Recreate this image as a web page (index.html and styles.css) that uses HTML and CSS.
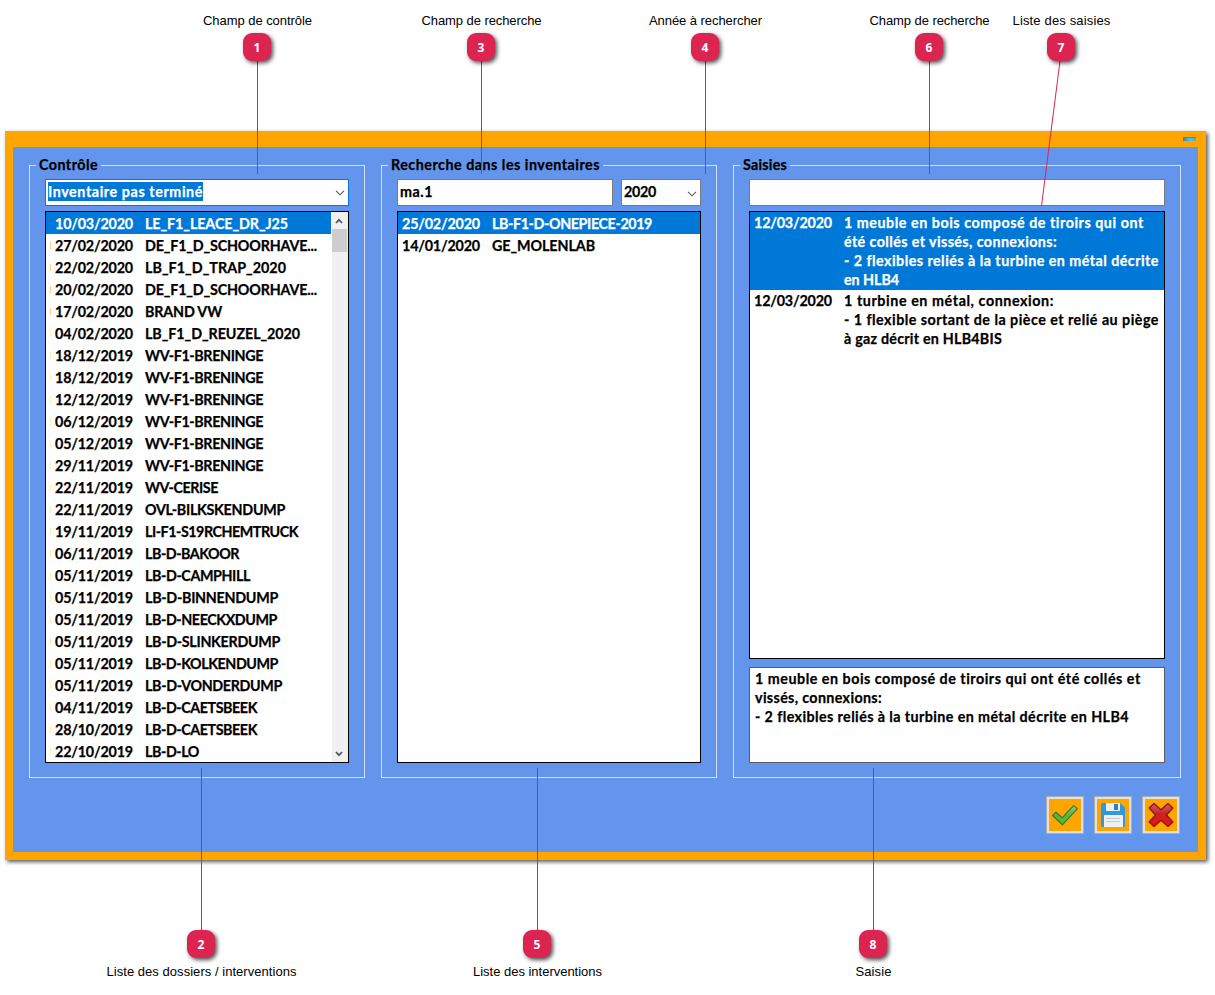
FILE: index.html
```
<!DOCTYPE html>
<html lang="fr">
<head>
<meta charset="utf-8">
<title>Inventaires</title>
<link rel="stylesheet" href="styles.css">
</head>
<body>
<main class="window">
  <div class="minimize"></div>
  <div class="groups">
    <section class="group">
      <h2 class="legend"><span data-w="59">Contrôle</span></h2>
      <div class="fields">
        <div class="field select focus"><span class="selected" data-w="155">Inventaire pas terminé</span><svg class="chevron" viewBox="0 0 10 6"><path d="M1 .8l4 4 4-4"/></svg></div>
      </div>
      <div class="list with-bar">
        <div class="rows" id="dossiers"></div>
        <div class="scrollbar">
          <svg class="arrow" viewBox="0 0 8 6"><path d="M1 5l3-3.2L7 5"/></svg>
          <div class="thumb"></div>
          <svg class="arrow down" viewBox="0 0 8 6"><path d="M1 1l3 3.2L7 1"/></svg>
        </div>
      </div>
    </section>
    <section class="group">
      <h2 class="legend"><span data-w="209">Recherche dans les inventaires</span></h2>
      <div class="fields">
        <div class="field"><span data-w="33">ma.1</span></div>
        <div class="field select year"><span data-w="32">2020</span><svg class="chevron" viewBox="0 0 10 6"><path d="M1 .8l4 4 4-4"/></svg></div>
      </div>
      <div class="list">
        <div class="rows" id="interventions"></div>
      </div>
    </section>
    <section class="group wide">
      <h2 class="legend"><span data-w="44">Saisies</span></h2>
      <div class="fields"><div class="field"></div></div>
      <div class="list entries">
        <div class="entry active">
          <span class="date" data-w="78">12/03/2020</span>
          <div>
            <p><span data-w="300">1 meuble en bois composé de tiroirs qui ont</span></p>
            <p><span data-w="213">été collés et vissés, connexions:</span></p>
            <p><span data-w="315">- 2 flexibles reliés à la turbine en métal décrite</span></p>
            <p><span data-w="55">en HLB4</span></p>
          </div>
        </div>
        <div class="entry">
          <span class="date" data-w="78">12/03/2020</span>
          <div>
            <p><span data-w="210">1 turbine en métal, connexion:</span></p>
            <p><span data-w="315">- 1 flexible sortant de la pièce et relié au piège</span></p>
            <p><span data-w="158">à gaz décrit en HLB4BIS</span></p>
          </div>
        </div>
      </div>
      <div class="memo">
        <p><span data-w="386">1 meuble en bois composé de tiroirs qui ont été collés et</span></p>
        <p><span data-w="127">vissés, connexions:</span></p>
        <p><span data-w="374">- 2 flexibles reliés à la turbine en métal décrite en HLB4</span></p>
      </div>
    </section>
  </div>
  <div class="actions">
    <button class="action" aria-label="Valider"><svg viewBox="0 0 32 32"><defs><linearGradient id="g" x1="0" y1="0" x2="0" y2="1"><stop offset="0" stop-color="#8bcf78"/><stop offset=".5" stop-color="#55b743"/><stop offset="1" stop-color="#35d30c"/></linearGradient></defs><path d="M3.600 16.500l3.300-3.300 6.300 5.600L24.600 6.600l3.800 3-15 16.200z" fill="url(#g)" stroke="#467233" stroke-width="1.200" stroke-linejoin="round"/></svg></button>
    <button class="action" aria-label="Enregistrer"><svg viewBox="0 0 32 32"><path d="M5.500 4H23l5 4.500v18q0 1.500-1.500 1.500h-21Q4 28 4 26.500v-21Q4 4 5.500 4z" fill="#3398db"/><path d="M9 4h14v7q0 1-1 1H10q-1 0-1-1z" fill="#eceff1"/><path d="M17 5h4v6h-4z" fill="#2582c4"/><path d="M8 16h17q1 0 1 1v11H7V17q0-1 1-1z" fill="#eef1f3"/><path d="M9 19.500h14M9 22.500h14" stroke="#c3c8cc" stroke-width="1.200"/></svg></button>
    <button class="action" aria-label="Fermer"><svg viewBox="0 0 32 32"><defs><linearGradient id="r" x1="0" y1="0" x2="0" y2="1"><stop offset="0" stop-color="#dc6060"/><stop offset=".45" stop-color="#c52424"/><stop offset="1" stop-color="#ef1010"/></linearGradient></defs><path d="M9 4.500l7 6.200 7-6.200 4.800 4.600-6.300 6.900 6.300 6.900L23 27.500l-7-6.300-7 6.300-4.800-4.600 6.300-6.900-6.300-6.900z" fill="url(#r)" stroke="#8c1717" stroke-width="1.400" stroke-linejoin="round"/></svg></button>
  </div>
</main>

<svg class="leaders" viewBox="0 0 1215 995">
  <path d="M257.500 61V174M481.500 61V174M705.500 61V174M929.500 61V174M1060 61L1041.500 206M201.500 768V931M537.500 768V931M873.500 768V931"/>
</svg>
<div class="callout c1"><span class="label" data-w="109">Champ de contrôle</span><b class="badge">1</b></div>
<div class="callout c3"><span class="label" data-w="120">Champ de recherche</span><b class="badge">3</b></div>
<div class="callout c4"><span class="label" data-w="113">Année à rechercher</span><b class="badge">4</b></div>
<div class="callout c6"><span class="label" data-w="120">Champ de recherche</span><b class="badge">6</b></div>
<div class="callout c7"><span class="label" data-w="98">Liste des saisies</span><b class="badge">7</b></div>
<div class="callout bottom c2"><b class="badge">2</b><span class="label" data-w="190">Liste des dossiers / interventions</span></div>
<div class="callout bottom c5"><b class="badge">5</b><span class="label" data-w="129">Liste des interventions</span></div>
<div class="callout bottom c8"><b class="badge">8</b><span class="label" data-w="36">Saisie</span></div>
<script src="app.js"></script>
</body>
</html>
```
FILE: app.js
```
// date, name, width of the name column text
const dossiers = [
  ["10/03/2020", "LE_F1_LEACE_DR_J25", 143],
  ["27/02/2020", "DE_F1_D_SCHOORHAVE...", 172],
  ["22/02/2020", "LB_F1_D_TRAP_2020", 141],
  ["20/02/2020", "DE_F1_D_SCHOORHAVE...", 172],
  ["17/02/2020", "BRAND VW", 77],
  ["04/02/2020", "LB_F1_D_REUZEL_2020", 155],
  ["18/12/2019", "WV-F1-BRENINGE", 118],
  ["18/12/2019", "WV-F1-BRENINGE", 118],
  ["12/12/2019", "WV-F1-BRENINGE", 118],
  ["06/12/2019", "WV-F1-BRENINGE", 118],
  ["05/12/2019", "WV-F1-BRENINGE", 118],
  ["29/11/2019", "WV-F1-BRENINGE", 118],
  ["22/11/2019", "WV-CERISE", 73],
  ["22/11/2019", "OVL-BILKSKENDUMP", 140],
  ["19/11/2019", "LI-F1-S19RCHEMTRUCK", 153],
  ["06/11/2019", "LB-D-BAKOOR", 94],
  ["05/11/2019", "LB-D-CAMPHILL", 105],
  ["05/11/2019", "LB-D-BINNENDUMP", 133],
  ["05/11/2019", "LB-D-NEECKXDUMP", 132],
  ["05/11/2019", "LB-D-SLINKERDUMP", 135],
  ["05/11/2019", "LB-D-KOLKENDUMP", 133],
  ["05/11/2019", "LB-D-VONDERDUMP", 137],
  ["04/11/2019", "LB-D-CAETSBEEK", 112],
  ["28/10/2019", "LB-D-CAETSBEEK", 112],
  ["22/10/2019", "LB-D-LO", 54]
];
const interventions = [
  ["25/02/2020", "LB-F1-D-ONEPIECE-2019", 160],
  ["14/01/2020", "GE_MOLENLAB", 103]
];

function fill(id, rows) {
  document.getElementById(id).innerHTML = rows.map(([date, name, w], i) =>
    `<div class="row${i ? "" : " active"}"><span class="date" data-w="78">${date}</span><span data-w="${w}">${name}</span></div>`
  ).join("");
}
fill("dossiers", dossiers);
fill("interventions", interventions);

// Spread the letters of each text over its intended width.
document.querySelectorAll("[data-w]").forEach(el => {
  const natural = el.getBoundingClientRect().width;
  el.style.letterSpacing = (el.dataset.w - natural) / el.textContent.length + "px";
});
```
FILE: styles.css
```
* { box-sizing: border-box; }
body {
  position: relative;
  width: 1215px;
  height: 995px;
  margin: 0;
  padding: 131px 0 0 5px;
  overflow: hidden;
  background: #fff;
  color: #000;
  font: bold 14.3px/22px Lato, "Open Sans", sans-serif;
}
p, h2 { margin: 0; font: inherit; }
span { white-space: nowrap; }

.window {
  position: relative;
  width: 1201px;
  height: 729px;
  padding: 18px 17px 0 16px;
  border: solid #ffa500;
  border-width: 16px 8px 8px;
  background: #6495ed;
  box-shadow: 2px 2px 4px rgba(0, 0, 0, .65);
  -webkit-text-stroke: .25px;
}
.minimize {
  position: absolute;
  top: -10px;
  right: 2px;
  width: 13px;
  height: 4px;
  background: linear-gradient(90deg, #2585b5, #60b9e3 50%, #45b0e0);
  border-top: 1px solid #348fae;
}
.groups { display: flex; gap: 16px; }
.group {
  display: flex;
  flex-direction: column;
  width: 336px;
  height: 613px;
  padding: 0 15px 14px;
  border: 1px solid #d5dff0;
}
.group.wide { width: 448px; }
.legend {
  display: flex;
  align-self: flex-start;
  height: 22px;
  margin: -12px 0 3px -9px;
  padding: 0 3px;
  background: #6495ed;
}
.fields { display: flex; gap: 8px; height: 27px; margin-bottom: 5px; }
.field {
  display: flex;
  flex: 1;
  align-items: center;
  justify-content: space-between;
  padding: 0 3px 1px 2px;
  border: 1px solid #7a7a7a;
  background: #fff;
}
.field.focus { border-color: #0078d7; padding-bottom: 2px; }
.field.year { flex: 0 0 80px; }
.selected { height: 19px; line-height: 20px; background: #0078d7; color: #fff; }
.chevron { width: 10px; height: 6px; margin-top: 3px; fill: none; stroke: #555; stroke-width: 1.1; }

.list {
  display: flex;
  flex: 1;
  min-height: 0;
  border: 1px solid #000;
  background: #fff;
}
.rows { flex: 1; min-width: 0; }
.row { display: flex; height: 22px; padding-left: 4px; line-height: 24px; }
.date { flex: none; margin-right: 12px; }
.with-bar .row {
  padding-left: 9px;
  background: linear-gradient(#ffd08a, #ffd08a) 4px 8px / 1px 7px no-repeat;
}
.with-bar .row:nth-child(n+6) { background-image: linear-gradient(#fff0c0, #fff0c0); }
.row.active, .with-bar .row.active { background: #0078d7; color: #fff; }
.scrollbar {
  display: flex;
  flex-direction: column;
  width: 17px;
  padding: 6px 0;
  border-left: 1px solid #fff;
  background: #f0f0f0;
}
.arrow { width: 8px; height: 6px; margin: 0 0 0 3px; flex: none; fill: none; stroke: #555; stroke-width: 1.7; }
.arrow.down { margin-top: auto; margin-bottom: -1px; }
.thumb { flex: none; height: 23px; margin: 5px 1px 0 0; background: #cdcdcd; }

.entries { flex-direction: column; margin-bottom: 8px; }
.entry { display: flex; padding: 1px 0 0 4px; line-height: 19px; }
.entry.active { height: 78px; background: #0078d7; color: #fff; }
.memo { height: 96px; padding: 1px 5px; border: 1px solid #5c5c5c; background: #fff; line-height: 19px; }

.actions { display: flex; justify-content: flex-end; gap: 10px; margin: 18px 1px 0 0; }
.action { width: 38px; height: 38px; padding: 0; border: 1px solid #adadad; background: #ffa500; box-shadow: inset 0 0 0 2px #e1e1e1; }
.action svg { display: block; width: 32px; height: 32px; margin: 2px; }

.leaders { position: absolute; inset: 0; width: 1215px; height: 995px; fill: none; stroke: #db2550; stroke-width: 1; }
.callout {
  position: absolute;
  top: 13px;
  display: flex;
  flex-direction: column;
  align-items: center;
  gap: 4px;
  width: 200px;
  margin-left: -99.5px;
  font: 13px/16px "Liberation Sans", Arial, sans-serif;
}
.callout.bottom { top: 930px; gap: 6px; }
.badge {
  width: 28px;
  height: 28px;
  border-radius: 9px;
  margin-left: -1px;
  background: #db2550;
  box-shadow: 2px 2px 4px rgba(0, 0, 0, .7);
  color: #fff;
  font: bold 12px/29px "Open Sans", sans-serif;
  text-align: center;
}
.c1 { left: 257px; }
.c3 { left: 481px; }
.c4 { left: 705px; }
.c6 { left: 929px; }
.c7 { left: 1061px; }
.c2 { left: 201px; }
.c5 { left: 537px; }
.c8 { left: 873px; }
```
